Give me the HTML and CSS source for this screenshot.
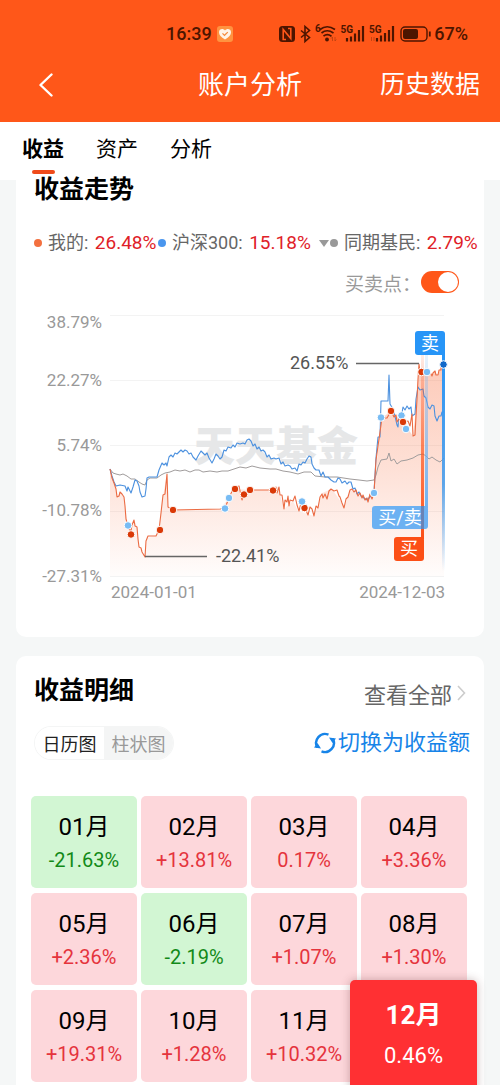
FILE: index.html
```html
<!DOCTYPE html>
<html lang="zh-CN">
<head>
<meta charset="utf-8">
<meta name="viewport" content="width=device-width, initial-scale=1">
<title>账户分析</title>
<link rel="stylesheet" href="styles.css">
</head>
<body>
<div class="page">
  <header class="top">
    <div class="status">
      <div class="status-time">
        <span>16:39</span>
        <svg class="health" width="16" height="16" viewBox="0 0 16 16" aria-hidden="true"><rect width="16" height="16" rx="3" fill="#ff9340"/><path d="M8 13.6C4 11 2 8.800 2 6.200 2 2.500 6.300 1.900 8 4.400 9.700 1.900 14 2.500 14 6.200 14 8.800 12 11 8 13.600Z" fill="#fff4e8"/><path d="M5.500 7.300l2 2 3.300-3.200" fill="none" stroke="#f58a3c" stroke-width="1.200"/></svg>
      </div>
      <div class="status-icons">
        <svg width="120" height="20" viewBox="280 24 120 20" aria-hidden="true">
          <rect x="281" y="26" width="16" height="16" rx="3.500" fill="#4d1500"/>
          <path d="M288 39.500H285.200V29.500L292.800 38.500V28.500H290" fill="none" stroke="#ff5719" stroke-width="1.600"/>
          <path d="M303 30.500l8.500 7-4.500 4V26.500l4.500 4-8.500 7" fill="none" stroke="#4d1500" stroke-width="1.600"/>
          <text x="317" y="32" class="tiny">6</text>
          <g fill="none" stroke="#4d1500" stroke-width="1.700">
            <path d="M322 29.500q7-5.500 15 0M323.500 33q5.500-4.500 12 0M325.500 36.200q3.500-3 8 0"/>
          </g>
          <circle cx="329" cy="39.500" r="1.900" fill="#4d1500"/>
          <path d="M334.500 37v4m-1.300-2.500 1.300-1.500M337 41v-4m1.300 2.500L337 41" stroke="#b8400f" stroke-width=".8" fill="none"/>
          <text x="342.500" y="33" class="tiny">5G</text>
          <text x="371" y="33" class="tiny">5G</text>
          <path d="M349 41.500v-3.500M353 41.500v-5M357 41.500v-8M361 41.500v-11.500M365 41.500v-15.500M379 41.500v-3.500M383 41.500v-6M387 41.500v-8.500M391 41.500v-11.500M395 41.500v-15.500" stroke="#4d1500" stroke-width="2.200" fill="none"/>
          <path d="M373.500 37v4M376 37v4" stroke="#b8400f" stroke-width=".8"/>
        </svg>
        <svg width="32" height="16" viewBox="0 0 32 16" aria-hidden="true"><rect x="1" y="1" width="26" height="14" rx="4" fill="none" stroke="#4d1500" stroke-width="1.400"/><rect x="3" y="3" width="15" height="10" rx="2" fill="#4d1500"/><path d="M29.800 5.500v5" stroke="#4d1500" stroke-width="1.800"/></svg>
        <span class="battery">67%</span>
      </div>
    </div>
    <div class="nav">
      <button class="back" aria-label="返回"><svg width="16" height="24" viewBox="0 0 16 24"><path d="M13.500 1.500L2.500 12l11 10.500" fill="none" stroke="#fff" stroke-width="2.400" stroke-linecap="round" stroke-linejoin="round"/></svg></button>
      <h1>账户分析</h1>
      <a class="history" href="#history">历史数据</a>
    </div>
  </header>
  <nav class="tabs">
    <a class="tab active" href="#income">收益</a>
    <a class="tab" href="#assets">资产</a>
    <a class="tab" href="#analysis">分析</a>
  </nav>

  <main>
    <section class="card trend" id="income">
      <h2>收益走势</h2>
      <ul class="legend">
        <li><i class="dot mine"></i><span>我的: <b>26.48%</b></span></li>
        <li><i class="dot index"></i><span>沪深300: <b>15.18%</b></span></li>
        <li><i class="caret"></i><i class="dot peer"></i><span>同期基民: <b>2.79%</b></span></li>
      </ul>
      <div class="switch-row">
        <label for="points">买卖点：</label><input class="switch" id="points" type="checkbox" role="switch" checked>
      </div>
      <svg class="chart" viewBox="16 300 468 310" role="img" aria-label="收益走势图">
        <defs>
          <linearGradient id="area" x1="0" y1="365" x2="0" y2="577" gradientUnits="userSpaceOnUse"><stop offset="0" stop-color="#fa7b50" stop-opacity=".4"/><stop offset=".5" stop-color="#fa7b50" stop-opacity=".23"/><stop offset="1" stop-color="#fa7b50" stop-opacity=".02"/></linearGradient>
          <linearGradient id="sell" x1="0" y1="355" x2="0" y2="572" gradientUnits="userSpaceOnUse"><stop offset="0" stop-color="#2795f7"/><stop offset=".6" stop-color="#4199ea" stop-opacity=".85"/><stop offset="1" stop-color="#4199ea" stop-opacity="0"/></linearGradient>
          <linearGradient id="buy" x1="0" y1="355" x2="0" y2="540" gradientUnits="userSpaceOnUse"><stop offset="0" stop-color="#fc4f16" stop-opacity=".1"/><stop offset=".5" stop-color="#fc4f16" stop-opacity=".65"/><stop offset="1" stop-color="#fc4f16"/></linearGradient>
          <linearGradient id="both" x1="0" y1="355" x2="0" y2="510" gradientUnits="userSpaceOnUse"><stop offset="0" stop-color="#6cb1f2" stop-opacity=".15"/><stop offset="1" stop-color="#6cb1f2"/></linearGradient>
        </defs>
        <path d="M110 316.500H444M110 381.500H444M110 446.500H444M110 512.500H444M110 577.500H444" stroke="#f3f3f3"/>
        <text class="watermark" x="194" y="462">天天基金</text>
        <g class="axis">
          <text x="102" y="329" text-anchor="end">38.79%</text>
          <text x="102" y="387" text-anchor="end">22.27%</text>
          <text x="102" y="452" text-anchor="end">5.74%</text>
          <text x="102" y="517" text-anchor="end">-10.78%</text>
          <text x="102" y="583" text-anchor="end">-27.31%</text>
          <text x="111" y="599">2024-01-01</text>
          <text x="445" y="599" text-anchor="end">2024-12-03</text>
        </g>
        <path fill="url(#area)" d="M110 470L115 485 118 498 120 493 124 498 127 523 131 532 134 521 137 527 139 548 142 553 145 558 147 539 156 537 159 531 163 497 167 475 168 508 173 511 220 510 229 499 235 490 250 491 273 491 278 488 284 510 293 502 298 512 308 515 314 517 322 494 332 490 344 507 351 491 368 502 374 494 379 440 382 419 391 412 403 423 413 437 417 400 419 365 421 373 430 373 432 377 435 372 437 377 441 368 444 366V577H110Z"/>
        <g fill="none" stroke-linejoin="round">
          <path stroke="#a09c9c" d="M110 470L113 474 116 475 120 476 123 475 127 477 131 480 135 480 139 483 142 485 145 486 147 481 150 479 157 479 161 476 165 474 170 473 175 471 180 472 185 471 190 473 195 471 199 471 203 473 210 472 217 473 222 472 228 472 234 470 240 468 246 469 252 467 260 469 270 470 276 470 283 472 290 473 298 475 304 473 311 473 315 477 325 478 337 478 350 480 359 481 367 482 374 481 376 476 378 468 381 461 387 460 389 454 391 462 394 460 397 465 401 462 407 461 413 459 418 456 423 455 426 457 429 460 432 458 436 461 440 463 444 459"/>
          <path stroke="#4c91df" stroke-width="1.100" d="M110 470L112 477 114 483 116 487 120 486 125 487 127 492 128 488 130 492 131 494 133 488 135 481 137 482 139 487 140 493 142 498 145 497 146 490 147 479 149 478 157 478 159 471 162 464 164 466 166 464 167 467 169 458 171 456 173 458 175 454 177 455 179 453 181 451 183 453 185 451 187 452 189 455 191 454 193 458 196 461 198 457 201 452 203 454 205 456 207 454 209 459 212 464 214 460 216 455 218 457 220 460 222 458 224 451 226 452 228 448 231 449 233 446 235 448 237 444 240 445 243 444 245 445 247 441 249 440 251 442 253 447 255 445 257 450 259 448 261 452 263 451 265 453 267 458 269 456 271 460 274 459 276 460 279 459 281 465 283 463 285 467 288 466 290 467 292 470 295 469 297 472 299 465 301 466 303 463 305 464 307 460 309 457 311 458 312 465 314 469 316 471 319 471 321 477 323 473 325 478 328 478 331 481 334 483 336 483 338 479 340 480 342 484 345 482 347 485 349 483 351 483 353 490 355 489 357 495 359 493 361 497 364 499 367 501 370 498 374 493 376 459 378 438 380 438 381 402 388 402 389 376 390 405 393 410 394 413 397 426 398 428 399 416 402 414 403 408 405 411 407 407 409 410 411 408 412 417 415 415 416 400 418 388 420 391 423 390 424 397 426 399 428 408 430 410 432 406 434 407 435 417 437 422 439 417 441 417 442 413 444 413"/>
          <path stroke="#eb6b43" stroke-width="1.100" d="M110 470L112 479 114 484 116 490 117 498 119 497 120 493 122 495 124 498 125 507 126 520 129 530 131 532 132 526 134 521 135 527 137 528 138 540 139 548 141 549 142 553 145 558 146 542 148 537 156 537 159 531 161 514 163 496 165 495 167 475 168 508 173 511 220 510 225 509 229 499 233 490 239 487 242 501 244 495 250 491 275 491 276 488 277 494 279 488 280 496 282 496 284 510 285 501 287 503 288 497 289 507 290 501 293 502 295 497 297 506 299 512 301 504 305 509 308 516 310 508 312 510 314 517 316 507 318 509 320 498 322 495 323 499 325 495 327 500 329 492 331 490 334 492 337 491 339 497 340 498 342 504 344 509 346 500 348 498 350 491 352 490 354 493 356 491 358 497 360 494 362 499 363 496 365 501 367 499 368 503 370 495 372 500 374 494 376 461 379 440 382 419 387 419 391 412 394 418 396 416 397 423 399 420 402 424 408 422 410 427 412 415 413 437 415 436 416 417 417 400 418 380 419 365 420 373 430 373 432 377 433 374 435 372 436 376 438 376 439 371 441 371 441 366 444 365"/>
          <path d="M356 364.500h63M145 557.500h62" stroke="#666" stroke-width="1.500"/>
        </g>
        <rect x="421" y="355" width="3" height="185" fill="url(#buy)"/>
        <rect x="425" y="355" width="3" height="154" fill="url(#both)"/>
        <rect x="442" y="350" width="3" height="222" fill="url(#sell)"/>
        <g class="points-buy">
          <circle cx="131" cy="535.500" r="3.800"/><circle cx="160" cy="531" r="3.800"/><circle cx="173" cy="511" r="3.800"/><circle cx="235" cy="490" r="3.800"/><circle cx="244" cy="495.500" r="3.800"/><circle cx="250" cy="491" r="3.800"/><circle cx="273" cy="491.500" r="3.800"/><circle cx="304.500" cy="509" r="3.800"/><circle cx="391" cy="412" r="3.800"/><circle cx="421.500" cy="373" r="3.800"/>
        </g>
        <g class="points-both">
          <circle cx="128" cy="526.500" r="3.800"/><circle cx="225" cy="509.500" r="3.800"/><circle cx="229" cy="499" r="3.800"/><circle cx="302" cy="502.500" r="3.800"/><circle cx="374" cy="494" r="3.800"/><circle cx="381" cy="418.500" r="3.800"/><circle cx="401.500" cy="416.500" r="3.800"/><circle cx="406" cy="430" r="3.800"/><circle cx="427" cy="373" r="3.800"/>
        </g>
        <circle cx="443.500" cy="365.500" r="3.800" fill="#1268c9" stroke="#fff"/>
        <circle cx="403" cy="423" r="3.800" fill="#da3907" stroke="#fff"/>
        <g class="callout"><text x="290" y="370">26.55%</text><text x="216" y="563">-22.41%</text></g>
        <rect x="415" y="332" width="30" height="24" rx="3" fill="#2795f7"/>
        <rect x="372" y="507" width="56" height="23" rx="3" fill="#6cb1f2"/>
        <rect x="421" y="507" width="3" height="23" fill="#666f9d" opacity=".7"/>
        <rect x="394" y="538" width="30" height="24" rx="3" fill="#fc4f16"/>
        <g class="tag"><text x="430" y="351">卖</text><text x="400" y="525">买/卖</text><text x="409" y="556">买</text></g>
      </svg>
    </section>

    <section class="card detail">
      <div class="detail-head">
        <h2>收益明细</h2>
        <a class="all" href="#all">查看全部<svg width="9" height="18" viewBox="0 0 9 18" aria-hidden="true"><path d="M1 2l6.500 7L1 16" fill="none" stroke="#ccc" stroke-width="1.600"/></svg></a>
      </div>
      <div class="modes">
        <div class="segment"><button class="selected">日历图</button><button>柱状图</button></div>
        <button class="swap"><svg width="22" height="22" viewBox="0 0 22 22" aria-hidden="true"><g fill="none" stroke="#1784e8" stroke-width="2.400"><path d="M3.300 15.500A9 9 0 0 1 14.500 2.700"/><path d="M18.700 6.500A9 9 0 0 1 7.500 19.300"/></g><path d="M0 15.500L3.500 11 7 16.500zM22 6.500L18.500 11 15 5.500z" fill="#1784e8"/></svg>切换为收益额</button>
      </div>
      <div class="months">
        <button class="month down"><span>01月</span><em>-21.63%</em></button>
        <button class="month"><span>02月</span><em>+13.81%</em></button>
        <button class="month"><span>03月</span><em>0.17%</em></button>
        <button class="month"><span>04月</span><em>+3.36%</em></button>
        <button class="month"><span>05月</span><em>+2.36%</em></button>
        <button class="month down"><span>06月</span><em>-2.19%</em></button>
        <button class="month"><span>07月</span><em>+1.07%</em></button>
        <button class="month"><span>08月</span><em>+1.30%</em></button>
        <button class="month"><span>09月</span><em>+19.31%</em></button>
        <button class="month"><span>10月</span><em>+1.28%</em></button>
        <button class="month"><span>11月</span><em>+10.32%</em></button>
        <button class="month current"><span>12月</span><em>0.46%</em></button>
      </div>
    </section>
  </main>
</div>
</body>
</html>
```
FILE: styles.css
```css
* { box-sizing: border-box; }
body {
  margin: 0;
  background: #f5f7f7;
  color: #000;
  font-family: Roboto, "Noto Sans CJK SC", sans-serif;
}
h1, h2, ul { margin: 0; padding: 0; font-weight: 400; }
a { color: inherit; text-decoration: none; }
button { border: 0; padding: 0; background: none; font: inherit; color: inherit; }
svg { display: block; }

.page { min-height: 100vh; overflow: hidden; display: flex; flex-direction: column; }

.top { background: #ff5719; color: #fff; padding: 22px 0 18px; }
.status {
  display: flex;
  justify-content: space-between;
  height: 24px;
  padding: 0 32px 0 166px;
  color: #4d1500;
  font-size: 18px;
  font-weight: 500;
  line-height: 24px;
}
.status-time, .status-icons { display: flex; align-items: center; }
.status-time { gap: 5px; }
.status-icons { gap: 2px; }
.tiny { font-size: 10px; font-weight: 700; fill: #4d1500; }
.nav {
  display: grid;
  grid-template-columns: 1fr auto 1fr;
  align-items: center;
  padding: 20px 20px 0 38px;
  line-height: 38px;
}
.nav h1 { font-size: 26px; padding-right: 18px; }
.back { justify-self: start; }
.history { justify-self: end; font-size: 25px; }

.tabs {
  position: relative;
  z-index: 1;
  display: flex;
  gap: 32px;
  height: 58px;
  padding: 11px 22px 0;
  background: #fff;
  font-size: 21px;
  line-height: 32px;
}
.tab { position: relative; }
.active { font-weight: 700; }
.active::after {
  content: "";
  position: absolute;
  left: 10px;
  bottom: 6px;
  width: 23px;
  height: 4px;
  border-radius: 2px;
  background: #ef4a1a;
}

main { flex: 1; display: flex; flex-direction: column; gap: 19px; }
.card { margin: 0 16px; background: #fff; border-radius: 10px; }
.card h2 { font-size: 25px; font-weight: 700; line-height: 30px; }
.trend { border-radius: 0 0 10px 10px; padding-bottom: 28px; }
.trend h2 { margin: -5px 0 0 18px; position: relative; z-index: 1; }
.legend {
  display: grid;
  grid-template-columns: 124fr 161fr 165fr;
  margin: 24px 0 0 18px;
  list-style: none;
  font-size: 18px;
  line-height: 28px;
  color: #666;
  white-space: nowrap;
}
.legend li { display: flex; align-items: center; min-width: 0; }
.legend b { margin-left: 2px; font-size: 19px; font-weight: 400; color: #df2128; }
.dot { flex: none; width: 8px; height: 8px; margin-right: 6px; border-radius: 50%; }
.mine { background: #f3703f; }
.index { background: #4a96ee; }
.peer { background: #999; }
.caret { border: 5px solid transparent; border-top: 7px solid #999; border-bottom: 0; margin-right: 1px; }
.switch-row {
  display: flex;
  justify-content: flex-end;
  align-items: center;
  height: 24px;
  margin: 13px 25px 5px 0;
  font-size: 19px;
  color: #999;
}
.switch {
  appearance: none;
  width: 38px;
  height: 22px;
  margin: 0;
  padding: 1px;
  border-radius: 11px;
  background: #ff5719;
  display: flex;
  justify-content: flex-end;
}
.switch::after { content: ""; width: 20px; height: 20px; border-radius: 50%; background: #fff; }
.chart { width: 100%; height: auto; }
.axis { font-size: 17px; fill: #999; }
.callout { font-size: 18px; fill: #555; }
.watermark { font-size: 41px; font-weight: 900; fill: #e6e7e8; }
.tag { font-size: 18px; fill: #fff; text-anchor: middle; }
.points-buy { fill: #da3907; stroke: #fff; }
.points-both { fill: #78bcf4; stroke: #fff; }

.detail { flex: 1; border-radius: 10px 10px 0 0; }
.detail-head {
  display: flex;
  justify-content: space-between;
  height: 70px;
  padding: 20px 18px 0;
}
.all { display: flex; align-items: center; gap: 5px; height: 34px; font-size: 22px; color: #666; }
.modes { display: flex; justify-content: space-between; height: 34px; padding: 0 14px 0 18px; }
.segment {
  display: flex;
  width: 140px;
  border: 1px solid #f4f5f5;
  border-radius: 17px;
  overflow: hidden;
  font-size: 18px;
}
.segment button { flex: 1; background: #f4f5f5; color: #999; }
.segment .selected { background: #fff; color: #222; }
.swap {
  display: flex;
  align-items: center;
  gap: 2px;
  font-size: 22px;
  line-height: 32px;
  color: #1784e8;
  white-space: nowrap;
}
.months {
  display: grid;
  grid-template-columns: repeat(4, 1fr);
  gap: 5px 4px;
  padding: 36px 17px 0 15px;
}
.month {
  display: flex;
  flex-direction: column;
  align-items: center;
  height: 92px;
  padding-top: 15px;
  border-radius: 5px;
  background: #fdd7db;
}
.month span { font-size: 24px; line-height: 33px; }
.month em { font-size: 20px; line-height: 32px; font-style: normal; color: #e5343d; }
.down { background: #d2f6d3; }
.down em { color: #128a18; }
.current {
  z-index: 1;
  height: 112px;
  margin: -10px -10px -10px -11px;
  background: #ff3033;
  color: #fff;
  box-shadow: 0 0 10px rgba(80, 30, 30, .3);
}
.current span { font-size: 26px; font-weight: 700; line-height: 40px; }
.current em { font-size: 22px; line-height: 42px; color: #fff; }
```
